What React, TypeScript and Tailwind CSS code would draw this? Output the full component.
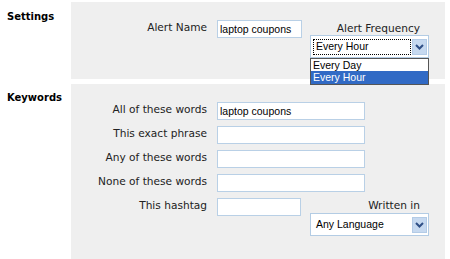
import React from "react";

function Arrow() {
  return (
    <div className="w-[15px] h-[16px] bg-[#c6d9f0] border border-[#b3cbe6] flex items-center justify-center">
      <svg width="9" height="6" viewBox="0 0 9 6">
        <path d="M1 1 L4.5 4.5 L8 1" stroke="#2f4f86" strokeWidth="2" fill="none" />
      </svg>
    </div>
  );
}

function TextBox({ w, value }: { w: string; value?: string }) {
  return (
    <div className={`${w} h-[18px] bg-white border border-[#b9d0e6] flex items-end pl-[2px] pb-[1px] font-['Liberation_Sans',sans-serif] text-[10.5px] leading-[13px] text-black`}>
      {value}
    </div>
  );
}

function Label({ children }: { children: React.ReactNode }) {
  return <div className="w-[136px] text-right pr-0 leading-[13px] pt-[1px]">{children}</div>;
}

export default function App() {
  return (
    <div className="w-[450px] h-[259px] bg-white overflow-hidden font-['DejaVu_Sans',sans-serif] text-[10.6px] text-[#222]">
      {/* settings */}
      <div className="flex pt-[2px]">
        <div className="w-[71px] pl-[7px] pt-[7px] font-bold text-[10px] text-black">Settings</div>
        <div className="relative w-[374px] h-[77px] bg-[#efefef] flex items-start pt-[18px]">
          <Label>Alert Name</Label>
          <div className="ml-[10px] mt-[0px]">
            <TextBox w="w-[85px]" value="laptop coupons" />
          </div>
          <div className="relative ml-[8px] w-[119px] flex flex-col items-end">
            <div className="pr-[9px] leading-[14px] pt-[1px]">Alert Frequency</div>
            <div className="w-[119px] h-[23px] bg-white border border-[#b3cce4] flex items-center pl-[2px] pr-[1px] gap-[1px]">
              <div className="flex-1 h-[16px] border border-dotted border-black flex items-center pl-[2px] font-['Liberation_Sans',sans-serif] text-[10.5px] text-black">
                Every Hour
              </div>
              <Arrow />
            </div>
            <div className="absolute left-0 top-[38px] w-[119px] h-[27px] bg-white border border-[#555] z-10 font-['Liberation_Sans',sans-serif] text-[10.5px] leading-[13px]">
              <div className="pl-[2px] h-[12px] text-black">Every Day</div>
              <div className="pl-[2px] h-[13px] bg-[#316ac5] text-white">Every Hour</div>
            </div>
          </div>
        </div>
      </div>

      {/* keywords */}
      <div className="flex mt-[5px]">
        <div className="w-[71px] pl-[7px] pt-[6px] font-bold text-[10px] text-black">Keywords</div>
        <div className="w-[374px] h-[175px] bg-[#efefef] pt-[18px] flex flex-col gap-[6px]">
          <div className="flex items-start">
            <Label>All of these words</Label>
            <div className="ml-[10px]">
              <TextBox w="w-[148px]" value="laptop coupons" />
            </div>
          </div>
          <div className="flex items-start">
            <Label>This exact phrase</Label>
            <div className="ml-[10px]">
              <TextBox w="w-[148px]" />
            </div>
          </div>
          <div className="flex items-start">
            <Label>Any of these words</Label>
            <div className="ml-[10px]">
              <TextBox w="w-[148px]" />
            </div>
          </div>
          <div className="flex items-start">
            <Label>None of these words</Label>
            <div className="ml-[10px]">
              <TextBox w="w-[148px]" />
            </div>
          </div>
          <div className="flex items-start">
            <Label>This hashtag</Label>
            <div className="ml-[10px]">
              <TextBox w="w-[84px]" />
            </div>
            <div className="ml-[9px] w-[119px] flex flex-col items-end">
              <div className="pr-[9px] leading-[15px]">Written in</div>
              <div className="w-[119px] h-[23px] bg-white border border-[#b3cce4] flex items-center pl-[5px] pr-[1px]">
                <div className="flex-1 font-['Liberation_Sans',sans-serif] text-[10.5px] text-black">Any Language</div>
                <Arrow />
              </div>
            </div>
          </div>
        </div>
      </div>
    </div>
  );
}
